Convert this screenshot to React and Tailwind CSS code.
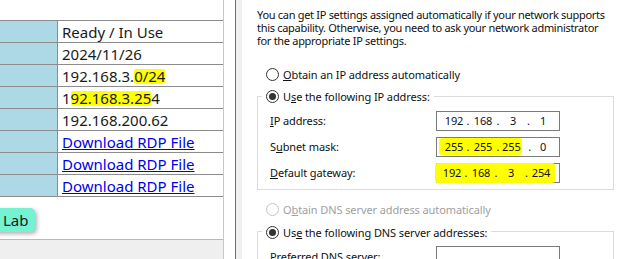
import React from "react";

const rows = [
  { text: "Ready / In Use" },
  { text: "2024/11/26" },
  { text: <>192.168.3.<span className="bg-[#ffff00] rounded-[2px]">0/24</span></> },
  { text: <>1<span className="bg-[#ffff00] rounded-[2px]">92.168.3.25</span>4</> },
  { text: "192.168.200.62" },
  { link: true },
  { link: true },
  { link: true },
];

function Radio({ checked, disabled }) {
  return (
    <span
      className={
        disabled
          ? "inline-flex w-[13px] h-[13px] rounded-full border border-[#c4c4c4] bg-white shrink-0"
          : "inline-flex w-[13px] h-[13px] rounded-full border border-[#333] bg-white items-center justify-center shrink-0"
      }
    >
      {checked && <span className="w-[7px] h-[7px] rounded-full bg-[#333]" />}
    </span>
  );
}

function Octets({ parts }) {
  return (
    <>
      <span className="w-[24px] text-center">{parts[0]}</span>
      <span className="w-[4px] text-center">.</span>
      <span className="w-[26px] text-center">{parts[1]}</span>
      <span className="w-[4px] text-center">.</span>
      <span className="w-[26px] text-center">{parts[2]}</span>
      <span className="w-[5px] text-center">.</span>
      <span className="w-[24px] text-center">{parts[3]}</span>
    </>
  );
}

function Field({ u, rest, children }) {
  return (
    <div className="flex items-center h-[20px]">
      <span className="w-[174px] pl-[8px]">
        <span className="underline">{u}</span>
        {rest}
      </span>
      {children}
    </div>
  );
}

export default function App() {
  return (
    <div className="w-[623px] h-[259px] overflow-hidden flex bg-white">
      {/* left panel: lab table */}
      <div
        className="w-[224px] h-full shrink-0 flex flex-col border-r border-[#c8c8c8] text-[15px] text-[#1a1a1a]"
        style={{ fontFamily: '"Noto Sans", "Open Sans", sans-serif' }}
      >
        <div className="mt-[20px] border-t border-[#8c8c8c]">
          {rows.map((r, i) => (
            <div key={i} className="flex h-[22px] border-b border-[#8c8c8c]">
              <div className="w-[58px] bg-[#add8e6] border-r border-[#8c8c8c]" />
              <div className="flex-1 pl-[4px] flex items-center leading-none pt-[1px]">
                {r.link ? (
                  <span className="text-[#0000ee] underline">Download RDP File</span>
                ) : (
                  r.text
                )}
              </div>
            </div>
          ))}
        </div>
        <div className="mt-[11px]">
          <span className="inline-flex items-center h-[24px] -ml-[10px] pl-[13px] pr-[6px] rounded-[5px] bg-[#74f2d2] shadow-[2px_2px_4px_rgba(0,0,0,0.3)]">
            Lab
          </span>
        </div>
        <div className="mt-auto h-[20px] border-t border-[#b9b9b9] bg-[#efefef]" />
      </div>

      <div className="w-[11px] shrink-0" />

      {/* right panel: windows IPv4 properties */}
      <div className="flex-1 h-full flex border-l border-[#6e6e6e]">
        <div className="w-[6px] bg-[#f0f0f0] shrink-0" />
        <div
          className="flex-1 pl-[15px] pt-[8px] text-[11px] tracking-[-0.1px] text-[#111] leading-[13px] whitespace-nowrap"
          style={{ fontFamily: '"Noto Sans", "Open Sans", sans-serif' }}
        >
          <p className="tracking-[-0.3px]">
            You can get IP settings assigned automatically if your network supports
            <br />
            this capability. Otherwise, you need to ask your network administrator
            <br />
            for the appropriate IP settings.
          </p>

          <div className="mt-[20px] ml-[9px] h-[14px] flex items-center gap-[4px]">
            <Radio />
            <span>
              <span className="underline">O</span>btain an IP address automatically
            </span>
          </div>

          <fieldset className="mt-[8px] w-[357px] border border-[#dcdcdc] pl-[4px] pb-[6px]">
            <legend className="px-[4px]">
              <span className="h-[14px] inline-flex items-center gap-[4px]">
                <Radio checked />
                <span>
                  U<span className="underline">s</span>e the following IP address:
                </span>
              </span>
            </legend>
            <div className="mt-[7px] flex flex-col gap-[6px]">
              <Field u="I" rest="P address:">
                <div className="w-[124px] h-[20px] border border-[#7a7a7a] flex items-center pl-[5px]">
                  <Octets parts={["192", "168", "3", "1"]} />
                </div>
              </Field>
              <Field rest={<>S<span className="underline">u</span>bnet mask:</>}>
                <div className="w-[124px] h-[20px] border border-[#7a7a7a] flex items-center pl-[2px]">
                  <span className="flex items-center h-[17px] pl-[3px] bg-[#ffff00] rounded-[3px]">
                    <span className="w-[24px] text-center">255</span>
                    <span className="w-[4px] text-center">.</span>
                    <span className="w-[26px] text-center">255</span>
                    <span className="w-[4px] text-center">.</span>
                    <span className="w-[22px] text-left pl-[2px]">255</span>
                  </span>
                  <span className="w-[9px] text-right">.</span>
                  <span className="w-[24px] text-center">0</span>
                </div>
              </Field>
              <Field u="D" rest="efault gateway:">
                <div className="w-[124px] h-[20px] border border-[#7a7a7a] flex items-center">
                  <span className="flex items-center h-[20px] w-[120px] pl-[5px] -ml-[2px] bg-[#ffff00] rounded-[3px]">
                    <Octets parts={["192", "168", "3", "254"]} />
                  </span>
                </div>
              </Field>
            </div>
          </fieldset>

          <div className="mt-[13px] ml-[9px] h-[14px] flex items-center gap-[4px] text-[#a0a0a0]">
            <Radio disabled />
            <span>
              O<span className="underline">b</span>tain DNS server address automatically
            </span>
          </div>

          <fieldset className="mt-[8px] w-[357px] border border-[#dcdcdc] pl-[4px] pb-[6px]">
            <legend className="px-[4px]">
              <span className="h-[14px] inline-flex items-center gap-[4px]">
                <Radio checked />
                <span>
                  Us<span className="underline">e</span> the following DNS server addresses:
                </span>
              </span>
            </legend>
            <div className="mt-[7px] flex flex-col gap-[6px]">
              <Field u="P" rest="referred DNS server:">
                <div className="w-[124px] h-[20px] border border-[#7a7a7a] flex items-center pl-[5px]">
                  <Octets parts={["", "", "", ""]} />
                </div>
              </Field>
            </div>
          </fieldset>
        </div>
      </div>
    </div>
  );
}
